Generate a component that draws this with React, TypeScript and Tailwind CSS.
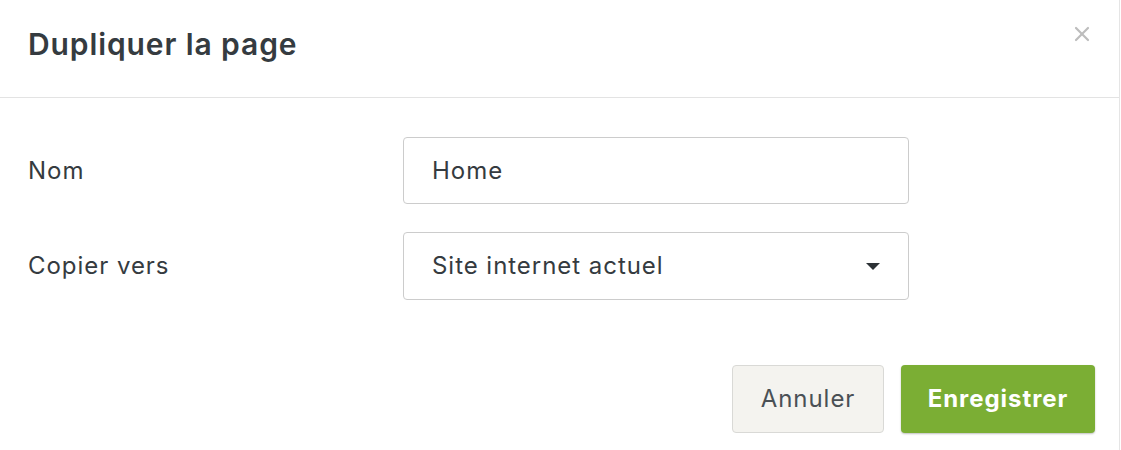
import { X } from "lucide-react";

const FONT = { fontFamily: "Inter, Lato, sans-serif" };

export default function App() {
  return (
    <div className="h-[450px] w-[1121px] bg-white text-[#353b40]" style={FONT}>
      <div className="h-full w-[1120px] border-r border-[#e5e5e5]">
        <header className="flex h-[98px] items-center justify-between border-b border-[#e3e3e3] pl-7 pr-[25px]">
          <h1 className="pb-2 text-[30px] font-semibold tracking-[0.03em]">Dupliquer la page</h1>
          <X size={24} strokeWidth={2.2} className="mb-[30px] text-[#bdbdbd]" />
        </header>

        <div className="flex flex-col gap-[28px] px-7 pt-[39px] text-[24px] tracking-[0.04em]">
          <div className="flex items-center">
            <label className="w-[375px]">Nom</label>
            <div className="flex h-[67px] w-[506px] items-center rounded border border-[#cccccc] px-7">
              Home
            </div>
          </div>
          <div className="flex items-center">
            <label className="w-[375px]">Copier vers</label>
            <div className="flex h-[68px] w-[506px] items-center justify-between rounded border border-[#cccccc] pl-7 pr-[28px]">
              <span>Site internet actuel</span>
              <span className="h-0 w-0 border-x-[7px] border-t-[7px] border-x-transparent border-t-[#2d3236]" />
            </div>
          </div>
        </div>

        <div className="mt-[65px] flex justify-end gap-[17px] pr-6 text-[24px] tracking-[0.04em]">
          <button className="h-[68px] w-[152px] rounded border border-[#d9d9d6] bg-[#f4f3ef] text-[#4a5055]">
            Annuler
          </button>
          <button className="h-[68px] w-[194px] rounded bg-[#7bae34] font-bold text-white shadow-[0_1px_2px_rgba(0,0,0,0.25)]">
            Enregistrer
          </button>
        </div>
      </div>
    </div>
  );
}
